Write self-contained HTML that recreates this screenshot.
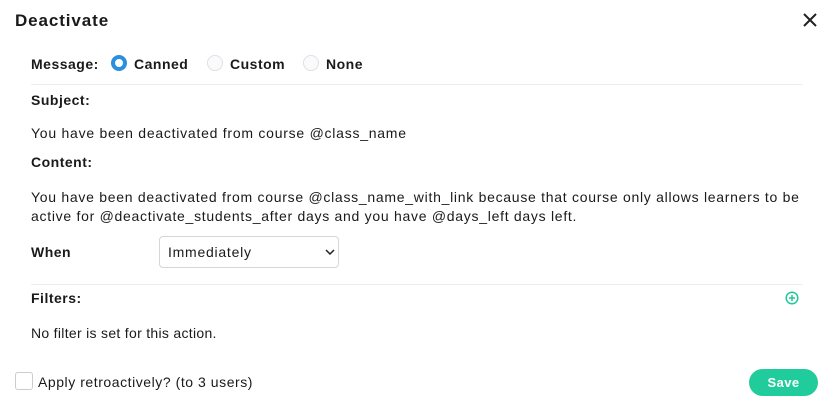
<!DOCTYPE html><html><head><style>
body{margin:0;width:834px;height:413px;background:#fff;font-family:"Liberation Sans",sans-serif;color:#1a1a1a;position:relative;overflow:hidden}
.a{position:absolute;white-space:nowrap;font-size:14px;letter-spacing:.75px;line-height:18px}
.b{font-weight:bold;letter-spacing:.5px}
.r{position:absolute;width:16px;height:16px;border-radius:50%;border:1px solid #dde0e6;box-sizing:border-box;top:55px;background:#fafafb}
.hr{position:absolute;left:31px;width:771px;height:1px;background:#eceaf2}
</style></head><body>
<div class="a b" style="left:15px;top:12px;font-size:17px;letter-spacing:.9px">Deactivate</div>
<svg style="position:absolute;left:802px;top:12px" width="16" height="16"><path d="M2 2L14 14M14 2L2 14" stroke="#222" stroke-width="2"/></svg>
<div class="a b" style="left:31px;top:55px">Message:</div>
<div class="r" style="left:111px;border:4px solid #2b8fe0;background:#fff"></div>
<div class="a b" style="left:134px;top:55px">Canned</div>
<div class="r" style="left:207px"></div>
<div class="a b" style="left:230px;top:55px">Custom</div>
<div class="r" style="left:303px"></div>
<div class="a b" style="left:326px;top:55px">None</div>
<div class="hr" style="top:84px"></div>
<div class="a b" style="left:31px;top:91px">Subject:</div>
<div class="a" style="left:31px;top:124px">You have been deactivated from course @class_name</div>
<div class="a b" style="left:31px;top:153px">Content:</div>
<div class="a" style="left:31px;top:188px;letter-spacing:.72px">You have been deactivated from course @class_name_with_link because that course only allows learners to be</div>
<div class="a" style="left:31px;top:207px;letter-spacing:.72px">active for @deactivate_students_after days and you have @days_left days left.</div>
<div class="a b" style="left:31px;top:243px">When</div>
<div style="position:absolute;left:159px;top:236px;width:180px;height:32px;border:1px solid #d6d6d6;border-radius:4px;box-sizing:border-box"></div>
<div class="a" style="left:168px;top:243px">Immediately</div>
<svg style="position:absolute;left:325px;top:248px" width="10" height="8"><path d="M1 2L5 6L9 2" stroke="#222" stroke-width="1.5" fill="none"/></svg>
<div class="hr" style="top:284px"></div>
<div class="a b" style="left:31px;top:289px">Filters:</div>
<svg style="position:absolute;left:785px;top:291px" width="14" height="14"><circle cx="7" cy="7" r="5.8" stroke="#21c99a" stroke-width="1.5" fill="none"/><path d="M7 4V10M4 7H10" stroke="#21c99a" stroke-width="1.5"/></svg>
<div class="a" style="left:31px;top:324px;letter-spacing:.3px">No filter is set for this action.</div>
<div style="position:absolute;left:15px;top:372px;width:18px;height:18px;border:1px solid #ccc;border-radius:3px;box-sizing:border-box"></div>
<div class="a" style="left:38px;top:373px;letter-spacing:.55px">Apply retroactively? (to 3 users)</div>
<div style="position:absolute;left:749px;top:369px;width:69px;height:27px;border-radius:14px;background:#21cc9c;color:#fff;font-weight:bold;font-size:13px;text-align:center;line-height:27px;letter-spacing:.4px">Save</div>
</body></html>
